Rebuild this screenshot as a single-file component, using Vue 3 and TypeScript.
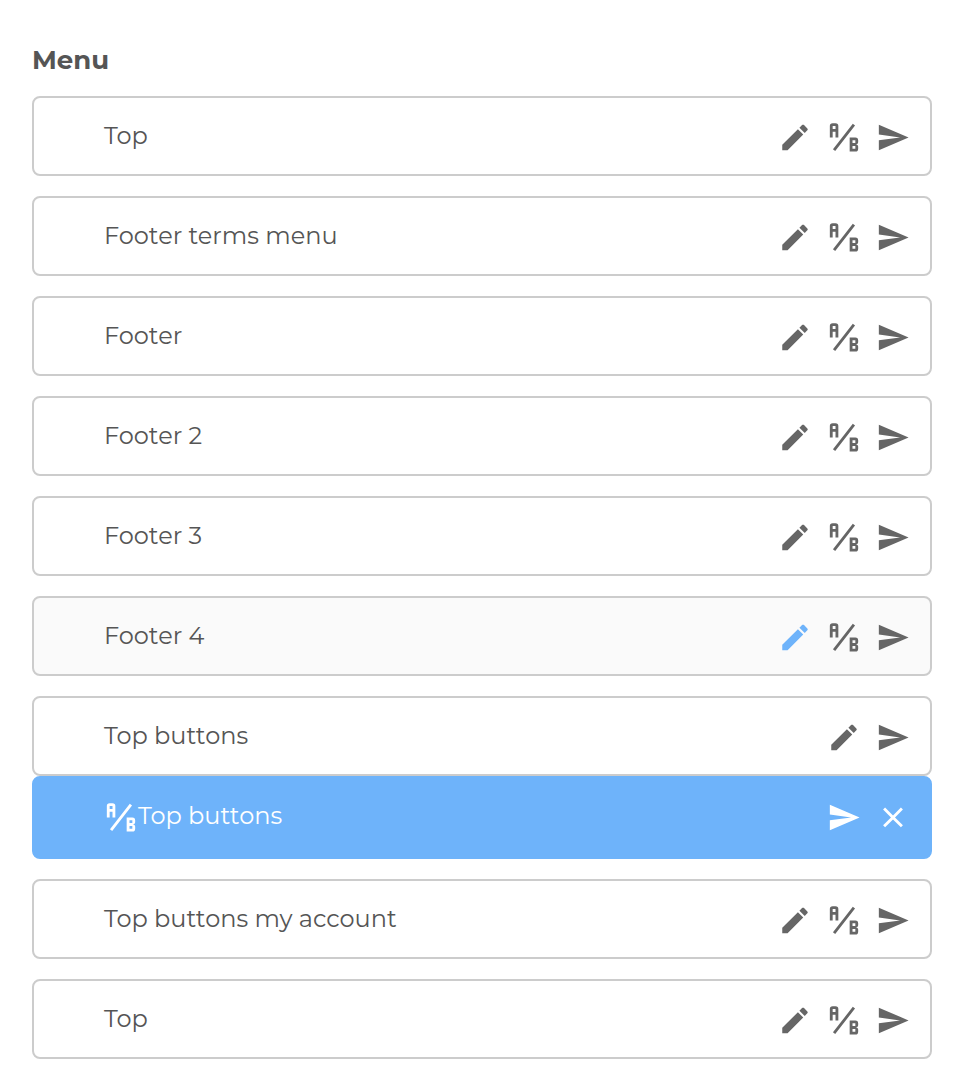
<script setup lang="ts">
type Icon = 'pencil' | 'ab' | 'send' | 'close'

interface MenuRow {
  label: string
  actions: Icon[]
  hovered?: boolean
  variant?: { label: string; actions: Icon[] }
}

const paths: Record<Icon, string> = {
  pencil:
    'M20.71,7.04C21.1,6.65 21.1,6 20.71,5.63L18.37,3.29C18,2.9 17.35,2.9 16.96,3.29L15.12,5.12L18.87,8.87M3,17.25V21H6.75L17.81,9.93L14.06,6.18L3,17.25Z',
  ab: 'M4 2A2 2 0 0 0 2 4V12H4V8H6V12H8V4A2 2 0 0 0 6 2H4M4 4H6V6H4M22 15.5V14A2 2 0 0 0 20 12H16V22H20A2 2 0 0 0 22 20V18.5A1.54 1.54 0 0 0 20.5 17A1.54 1.54 0 0 0 22 15.5M20 20H18V18H20V20M20 16H18V14H20M5.79 21.61L4.21 20.39L18.21 2.39L19.79 3.61Z',
  send: 'M2,21L23,12L2,3V10L17,12L2,14V21Z',
  close:
    'M19,6.41L17.59,5L12,10.59L6.41,5L5,6.41L10.59,12L5,17.59L6.41,19L12,13.41L17.59,19L19,17.59L13.41,12L19,6.41Z',
}

const all: Icon[] = ['pencil', 'ab', 'send']

const rows: MenuRow[] = [
  { label: 'Top', actions: all },
  { label: 'Footer terms menu', actions: all },
  { label: 'Footer', actions: all },
  { label: 'Footer 2', actions: all },
  { label: 'Footer 3', actions: all },
  { label: 'Footer 4', actions: all, hovered: true },
  {
    label: 'Top buttons',
    actions: ['pencil', 'send'],
    variant: { label: 'Top buttons', actions: ['send', 'close'] },
  },
  { label: 'Top buttons my account', actions: all },
  { label: 'Top', actions: all },
]
</script>

<template>
  <main class="menu">
    <h2 class="title">Menu</h2>
    <ul class="list">
      <li v-for="(row, i) in rows" :key="i">
        <div class="row" :class="{ hovered: row.hovered }">
          <span class="label">{{ row.label }}</span>
          <div class="actions">
            <svg v-for="icon in row.actions" :key="icon" class="icon" :class="icon" viewBox="0 0 24 24">
              <path :d="paths[icon]" />
            </svg>
          </div>
        </div>
        <div v-if="row.variant" class="row variant">
          <svg class="icon" viewBox="0 0 24 24"><path :d="paths.ab" /></svg>
          <span class="label">{{ row.variant.label }}</span>
          <div class="actions">
            <svg v-for="icon in row.variant.actions" :key="icon" class="icon" viewBox="0 0 24 24">
              <path :d="paths[icon]" />
            </svg>
          </div>
        </div>
      </li>
    </ul>
  </main>
</template>

<style>
body {
  background: #fff;
}
</style>

<style scoped>
.menu {
  box-sizing: border-box;
  padding: 44px 28px 32px 32px;
  color: #555;
  font-family: Montserrat, Inter, 'Open Sans', sans-serif;
}
.title {
  margin: 0 0 20px;
  font-size: 26px;
  line-height: 32px;
  font-weight: 700;
}
.list {
  display: flex;
  flex-direction: column;
  gap: 20px;
  margin: 0;
  padding: 0;
  list-style: none;
}
.row {
  box-sizing: border-box;
  display: flex;
  align-items: center;
  height: 80px;
  padding: 2px 20px 0 70px;
  border: 2px solid #ccc;
  border-radius: 8px;
  background: #fff;
}
.row.hovered {
  background: #fafafa;
}
.row.variant {
  height: 83px;
  padding: 1px 20px 2px 70px;
  border-color: #6eb3fa;
  background: #6eb3fa;
  color: #fff;
}
.label {
  padding-bottom: 3px;
  font-size: 24px;
  line-height: 30px;
  font-weight: 400;
  white-space: nowrap;
}
.actions {
  display: flex;
  gap: 15px;
  margin-left: auto;
}
.icon {
  display: block;
  flex: none;
  width: 34px;
  height: 34px;
  fill: #666;
  transform: translateY(0.4px);
}
.hovered .pencil {
  fill: #6eb3fa;
}
.variant .icon {
  fill: #fff;
}
</style>
